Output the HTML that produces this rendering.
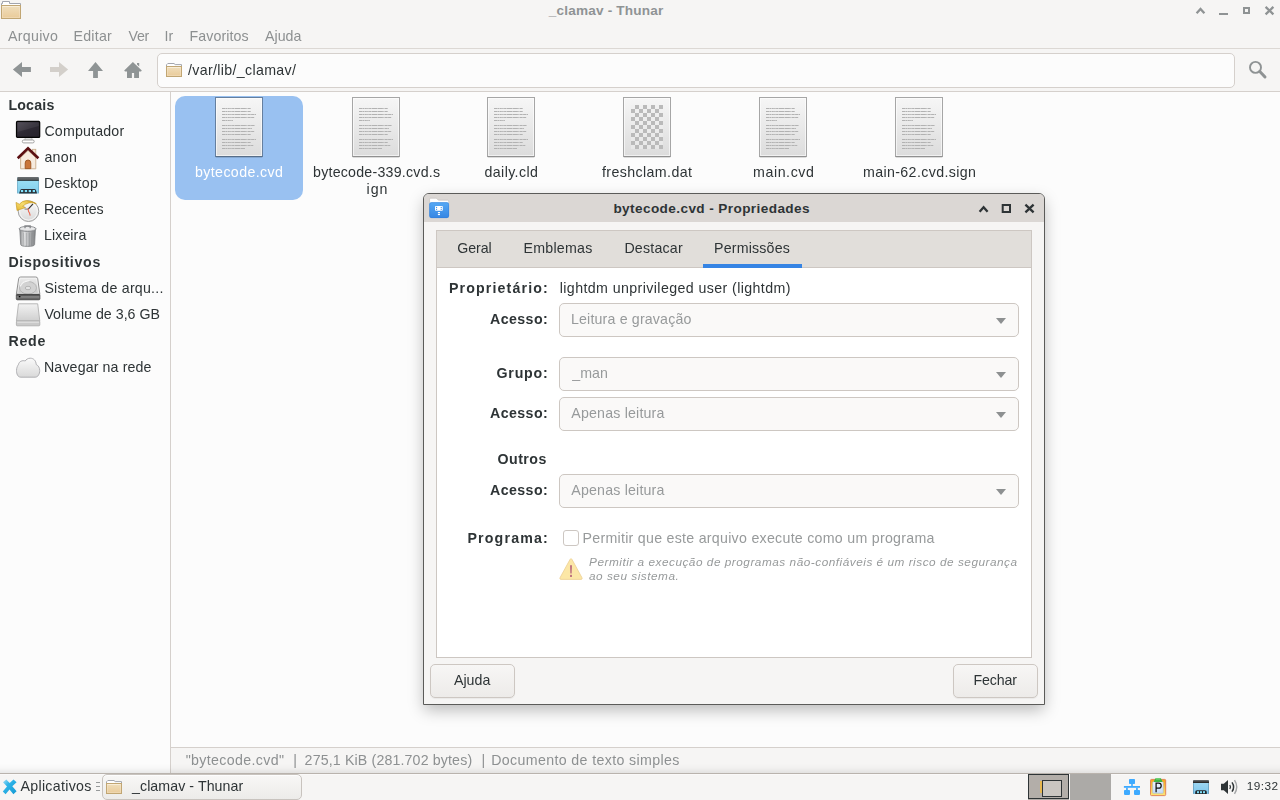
<!DOCTYPE html>
<html><head><meta charset="utf-8">
<style>
*{box-sizing:border-box;margin:0;padding:0}
html,body{width:1280px;height:800px;overflow:hidden;background:#f6f5f4;font-family:"Liberation Sans",sans-serif;font-size:14px;color:#2e3436}
.a{position:absolute}
.t{position:absolute;white-space:nowrap;line-height:20px;height:20px}
svg{position:absolute;overflow:visible}
.combo{position:absolute;left:559px;width:460px;height:34px;border:1px solid #cdc7c2;border-radius:5px;background:#faf9f8}
.combo:after{content:"";position:absolute;left:436px;top:14px;border-left:5px solid transparent;border-right:5px solid transparent;border-top:6px solid #8d9091}
.btn{position:absolute;height:34px;width:85px;border:1px solid #cdc7c2;border-radius:5px;background:linear-gradient(#f7f6f5,#edebe9);box-shadow:0 1px 1px rgba(0,0,0,.05)}
</style></head><body>
<!-- main window chrome -->
<div class="a" style="left:0;top:48px;width:1280px;height:1px;background:#dcd8d4"></div>
<div class="a" style="left:0;top:91px;width:1280px;height:1px;background:#d5d0cc"></div>
<div class="a" style="left:157px;top:53px;width:1078px;height:35px;background:#fcfcfc;border:1px solid #d5d0cc;border-radius:5px"></div>
<div class="a" style="left:0;top:92px;width:170px;height:681px;background:#fcfcfc"></div>
<div class="a" style="left:170px;top:92px;width:1px;height:681px;background:#d5d0cc"></div>
<div class="a" style="left:171px;top:92px;width:1109px;height:655px;background:#fcfcfc"></div>
<div class="a" style="left:171px;top:747px;width:1109px;height:1px;background:#d5d0cc"></div>
<div class="a" style="left:0;top:763px;width:1280px;height:10px;background:linear-gradient(rgba(0,0,0,0),rgba(0,0,0,.02) 50%,rgba(0,0,0,.08))"></div>
<div class="a" style="left:0;top:773px;width:1280px;height:27px;background:#f6f5f4;border-top:1px solid #b9b3ad;box-shadow:inset 0 1px 0 #faf9f9"></div>
<!-- selection -->
<div class="a" style="left:175px;top:96px;width:128px;height:104px;background:#99c1f1;border-radius:10px"></div>
<!-- panel task button -->
<div class="a" style="left:102px;top:774px;width:200px;height:26px;border:1px solid #c8c3be;border-radius:5px;background:linear-gradient(#f8f7f6,#ecebe9);box-shadow:inset 0 1px 0 #fdfdfd"></div>
<svg width="0" height="0" style="left:0;top:0"><defs>
<linearGradient id="fg" x1="0" y1="0" x2="0" y2="1"><stop offset="0" stop-color="#f0dfbd"/><stop offset="1" stop-color="#e9ca98"/></linearGradient>
<linearGradient id="dg" x1="0" y1="0" x2="0" y2="1"><stop offset="0" stop-color="#f6f6f6"/><stop offset="1" stop-color="#dcdcdc"/></linearGradient>
<linearGradient id="mg" x1="0" y1="0" x2="1" y2="0"><stop offset="0" stop-color="#8e9092"/><stop offset=".3" stop-color="#dfe0e1"/><stop offset=".6" stop-color="#b4b6b8"/><stop offset="1" stop-color="#7e8082"/></linearGradient>
<linearGradient id="sg" x1="0" y1="0" x2="1" y2="1"><stop offset="0" stop-color="#4a4550"/><stop offset=".5" stop-color="#2d2933"/><stop offset="1" stop-color="#26222b"/></linearGradient>
<linearGradient id="bg2" x1="0" y1="0" x2="0" y2="1"><stop offset="0" stop-color="#a5daf3"/><stop offset="1" stop-color="#7cc6ec"/></linearGradient>
<linearGradient id="cg" x1="0" y1="0" x2="0" y2="1"><stop offset="0" stop-color="#fafafa"/><stop offset="1" stop-color="#d9d9d9"/></linearGradient>
<linearGradient id="hg" x1="0" y1="0" x2="0" y2="1"><stop offset="0" stop-color="#f2f2f2"/><stop offset="1" stop-color="#cfcfcf"/></linearGradient>
<g id="doc">
 <rect x=".5" y="59" width="47" height="2" rx="1" fill="#000" opacity=".13"/>
 <rect x="1" y="1" width="46" height="58" fill="url(#dg)"/>
 <rect x=".5" y=".5" width="47" height="59" fill="none" stroke="#000" stroke-opacity=".34"/>
 <rect x="1.5" y="1.5" width="45" height="57" fill="none" stroke="#fff" opacity=".6"/>
 <g stroke="#b2b2b2" stroke-width="1" stroke-dasharray="3 .4 2 .4 2 .4 1.500 .4 2 .4 6 .4 5 .4 1 .4 3 .4">
  <path d="M7 11.500H36M7 14.500H35.700M7 17.500H41M7 20.500H39.600M7 23.500H18"/>
  <path d="M7 28.500H40M7 31.500H37M7 34.500H39.600M7 37.500H35.700"/>
  <path d="M7 42.500H41M7 45.500H35.700M7 48.500H38.300M7 51.500H30"/>
 </g>
</g>
<g id="fold">
 <path d="M1.500 5.500V3.500H2.500V1.500H9.500V3.500H20.500V5.500" fill="#fff" stroke="#a3a6ae"/>
 <rect x="1.500" y="5.500" width="19" height="13" fill="url(#fg)" stroke="#c1a673"/>
 <rect x="2.500" y="6.500" width="17" height="11" fill="none" stroke="#f8ecd6" opacity=".35"/><path d="M2.500 6.500H19.500" stroke="#faf0de" opacity=".8"/>
</g>
<g id="fold16">
 <path d="M.5 3.500V1.800L1.800 .5H8L9.200 1.600H15.500V3.500" fill="#fff" stroke="#a3a6ae"/>
 <rect x=".5" y="3.500" width="15" height="10" fill="url(#fg)" stroke="#c1a673"/>
 <rect x="1.500" y="4.500" width="13" height="8" fill="none" stroke="#f8ecd6" opacity=".35"/><path d="M1.500 4.500H14.500" stroke="#faf0de" opacity=".8"/>
</g>
</defs></svg>
<!-- title folder -->
<svg style="left:0;top:0" width="22" height="20"><use href="#fold"/></svg>
<!-- window buttons main -->
<svg style="left:1190px;top:0" width="90" height="22" fill="none" stroke="#8f9394" stroke-width="2">
 <path d="M6.600 13.200L10.500 9L14.400 13.200" stroke-width="2.300"/>
 <path d="M29 14H38"/>
 <rect x="54" y="8" width="5" height="5"/>
 <path d="M75.600 6.900L83.400 14.300M83.400 6.900L75.600 14.300" stroke-width="2.300"/>
</svg>
<!-- toolbar -->
<svg style="left:0;top:49px" width="160" height="42">
 <path d="M12.900 20.400L22 13V18.100H30.900V22.900H22V28Z" fill="#8f9495"/>
 <path d="M68.100 20.400L59 13V18.100H50V22.900H59V28Z" fill="#d3cfca"/>
 <path d="M95.500 12.900L103 21.900H97.900V28.900H93.100V21.900H88Z" fill="#8f9495"/>
 <path d="M132.900 12.900L141.800 21.600L141 22.500H139V28.900H134.100V24H131.900V28.900H127V22.500H125L124.200 21.600Z" fill="#8f9495"/>
 <path d="M137 14H139.200V17.500L137 15.400Z" fill="#8f9495"/>
</svg>
<svg style="left:166px;top:63px" width="16" height="14"><use href="#fold16"/></svg>
<svg style="left:1240px;top:54px" width="36" height="32" fill="none" stroke="#8f9394">
 <circle cx="15.500" cy="13.400" r="5.500" stroke-width="1.900"/>
 <path d="M19.800 17.500L25 23" stroke-width="3" stroke-linecap="round"/>
</svg>
<!-- file icons -->
<svg style="left:215px;top:97px" width="48" height="61"><use href="#doc"/></svg>
<svg style="left:352px;top:97px" width="48" height="61"><use href="#doc"/></svg>
<svg style="left:487px;top:97px" width="48" height="61"><use href="#doc"/></svg>
<svg style="left:623px;top:97px" width="48" height="61">
 <rect x=".5" y="59" width="47" height="2" rx="1" fill="#000" opacity=".13"/>
 <rect x="1" y="1" width="46" height="58" fill="url(#dg)"/>
 <rect x=".5" y=".5" width="47" height="59" fill="none" stroke="#000" stroke-opacity=".34"/>
 <rect x="1.500" y="1.500" width="45" height="57" fill="none" stroke="#fff" opacity=".6"/>
 <defs><pattern id="ck" width="8" height="8" patternUnits="userSpaceOnUse" x="8" y="8"><rect width="8" height="8" fill="#f0f0f0" opacity=".5"/><rect x="4" width="4" height="4" fill="#bababa"/><rect y="4" width="4" height="4" fill="#bababa"/></pattern></defs>
 <rect x="8" y="8" width="32" height="44" fill="url(#ck)"/>
</svg>
<svg style="left:759px;top:97px" width="48" height="61"><use href="#doc"/></svg>
<svg style="left:895px;top:97px" width="48" height="61"><use href="#doc"/></svg>
<!-- sidebar: computer -->
<svg style="left:16px;top:120px" width="25" height="24">
 <path d="M9.200 17.500H15.800L16.300 21H8.700Z" fill="#dedede" stroke="#a6a6a6" stroke-width=".7"/>
 <rect x="6.300" y="20" width="11.900" height="2.900" rx="1.400" fill="#fff" stroke="#999" stroke-width=".9"/>
 <rect x=".5" y="1.400" width="23.200" height="16" rx="1" fill="url(#sg)" stroke="#050505" stroke-width="1.200"/>
 <path d="M1.500 2.400H22.700V6L1.500 12Z" fill="#fff" opacity=".07"/>
</svg>
<!-- home -->
<svg style="left:16px;top:146px" width="24" height="24">
 <rect x="16.400" y="3.300" width="3.400" height="8" fill="#f3e4d2" stroke="#c9ad8a" stroke-width=".8"/>
 <path d="M4.600 11.500L12 4.500L19.800 11.500V22.800H4.600Z" fill="#f6ebdf" stroke="#c9ad8a" stroke-width=".9"/>
 <path d="M1.700 12.200L12 2.300L22.400 12.200" fill="none" stroke="#5b0f12" stroke-width="2.600" stroke-linejoin="miter"/>
 <path d="M9.200 22.600V17Q9.200 14 12 14Q14.800 14 14.800 17V22.600Z" fill="#c9763b" stroke="#9c531f" stroke-width=".9"/>
</svg>
<!-- desktop -->
<svg style="left:16px;top:176px" width="24" height="19">
 <defs><linearGradient id="tb2" x1="0" y1="0" x2="0" y2="1"><stop offset="0" stop-color="#6e7274"/><stop offset=".72" stop-color="#54585a"/><stop offset=".8" stop-color="#161616"/><stop offset="1" stop-color="#161616"/></linearGradient>
 <linearGradient id="bg3" x1="0" y1="0" x2="0" y2="1"><stop offset="0" stop-color="#a0e3f7"/><stop offset="1" stop-color="#7fcdeb"/></linearGradient></defs>
 <rect x="1.200" y="1" width="21.700" height="16.600" rx="1" fill="url(#bg3)"/>
 <path d="M1.200 4.800V2Q1.200 1 2.200 1H21.900Q22.900 1 22.900 2V4.800Z" fill="url(#tb2)"/>
 <path d="M1.200 4.800H1.900V17.600H1.200ZM22.200 4.800H22.900V17.600H22.200Z" fill="#3f7c9c" opacity=".55"/>
 <path d="M3 17.600L4.300 14Q4.700 13 5.800 13H18.400Q19.500 13 19.900 14L21.200 17.600Z" fill="#2b3238"/>
 <g fill="#80e2fd"><rect x="4.900" y="14" width="2.300" height="2.100"/><rect x="8.800" y="14" width="2.300" height="2.100"/><rect x="12.700" y="14" width="2.300" height="2.100"/><rect x="16.700" y="14" width="2.300" height="2.100"/></g>
</svg>
<!-- recent -->
<svg style="left:15px;top:198px" width="26" height="26">
 <defs><linearGradient id="yg" x1="1" y1="0" x2="0" y2="1"><stop offset="0" stop-color="#d8a51e"/><stop offset=".5" stop-color="#f6dc6e"/><stop offset="1" stop-color="#e3b431"/></linearGradient></defs>
 <circle cx="13.500" cy="13.200" r="10.300" fill="url(#cg)" stroke="#a0a0a0" stroke-width="1"/>
 <circle cx="13.500" cy="13.200" r="8.900" fill="none" stroke="#fff" stroke-width="1" opacity=".7"/>
 <path d="M13.200 11.200L18 5.800" stroke="#333" stroke-width="1.100" fill="none"/>
 <path d="M13.200 11.200L9.500 11" stroke="#777" stroke-width="1" fill="none"/>
 <path d="M13 10.300L13.600 13.500L14.500 15L15.200 17.600" stroke="#ea6a55" stroke-width="1.100" fill="none"/>
 <path d="M1 4.400L4.400 6.200Q10 -.8 21.300 5.600Q13.500 2.800 7.600 8.300L10.500 9.500L2 12.500Z" fill="url(#yg)" stroke="#c2931a" stroke-width=".6" stroke-linejoin="round"/>
</svg>
<!-- trash -->
<svg style="left:18px;top:224px" width="20" height="24">
 <path d="M1.800 5.500L2.700 20.500Q2.800 22.400 9.600 22.400Q16.500 22.400 16.600 20.500L17.400 5.500Z" fill="url(#mg)" stroke="#7b7d80" stroke-width=".8"/>
 <path d="M5.400 8.500L5.900 21.500M8.400 8.800V22M11.300 8.800V22M14 8.500L13.600 21.500" stroke="#6a6c6f" stroke-width=".7" opacity=".45" fill="none"/>
 <ellipse cx="9.600" cy="4.900" rx="8.500" ry="2.500" fill="#d9dadb" stroke="#7f8184" stroke-width=".9"/>
 <ellipse cx="9.600" cy="4.500" rx="7" ry="1.500" fill="#ececed" opacity=".8"/>
 <path d="M7 4.300V1.900H12.200V4.300" fill="none" stroke="#85878a" stroke-width="1.300"/>
</svg>
<!-- hdd -->
<svg style="left:16px;top:276px" width="25" height="25">
 <defs><linearGradient id="hs" x1="0" y1="0" x2="0" y2="1"><stop offset="0" stop-color="#2e2e2e"/><stop offset=".45" stop-color="#8c8c8c"/><stop offset="1" stop-color="#4c4c4c"/></linearGradient>
 <linearGradient id="ht" x1="0" y1="0" x2="0" y2="1"><stop offset="0" stop-color="#ececec"/><stop offset="1" stop-color="#c6c6c6"/></linearGradient></defs>
 <path d="M4.600 1H19.800Q21.400 1 21.700 2.600L23.900 18.400H.3L2.700 2.600Q3 1 4.600 1Z" fill="url(#ht)" stroke="#878787" stroke-width=".9"/>
 <path d="M4.800 2.200H19.600Q20.500 2.200 20.600 3L22.500 17.300H1.700L3.800 3Q3.900 2.200 4.800 2.200Z" fill="none" stroke="#fff" stroke-width=".7" opacity=".7"/>
 <ellipse cx="12" cy="11.800" rx="8.500" ry="6.300" fill="#d2d2d2" stroke="#a9a9a9" stroke-width=".7"/>
 <path d="M4.200 10.500Q5.500 5.500 13.500 4.600" fill="none" stroke="#f6f6f6" stroke-width="1.200"/>
 <ellipse cx="12" cy="12" rx="2.800" ry="1.700" fill="#e4e4e4" stroke="#a4a4a4" stroke-width=".7"/>
 <rect x=".3" y="18.400" width="23.600" height="5.400" rx="1" fill="url(#hs)" stroke="#3a3a3a" stroke-width=".7"/>
 <rect x="2.800" y="20" width="1.600" height="1.300" fill="#050505"/>
</svg>
<!-- volume -->
<svg style="left:16px;top:303px" width="25" height="24">
 <path d="M2.500 .8H21.700L23.800 18H.4Z" fill="url(#hg)" stroke="#b1b1b1" stroke-width=".9"/>
 <rect x=".4" y="18" width="23.400" height="4.800" rx=".8" fill="#c9c9c9" stroke="#a9a9a9" stroke-width=".8"/>
 <rect x="1.200" y="18.600" width="21.800" height="1.100" fill="#e4e4e4"/>
</svg>
<!-- cloud -->
<svg style="left:16px;top:357px" width="25" height="22">
 <path d="M4.800 20.200C1.500 20.200 .5 16.500 .5 13.500C.5 10.500 1.800 8.500 2.600 7.200C3 4.500 6.500 3 9.200 4C10 2.500 12 1.200 14.200 1.200C17.500 1.200 20 3.500 20.200 7.500C22.500 8.500 23.700 11 23.700 13.500C23.700 17 22 20.200 19.200 20.200Z" fill="url(#cg)" stroke="#a9a9ad" stroke-width=".9"/>
</svg>
<!-- panel icons -->
<svg style="left:106px;top:780px" width="16" height="14"><use href="#fold16"/></svg>

<svg style="left:0;top:772px" width="28" height="28">
 <defs><linearGradient id="xg" x1="0" y1="0" x2="1" y2="1"><stop offset="0" stop-color="#a6e0f8"/><stop offset=".35" stop-color="#2fb4e8"/><stop offset="1" stop-color="#1499d3"/></linearGradient></defs>
 <path d="M3 10.200L6.300 7.500L9.700 11L13.500 7.600L16.600 10.300L12.300 14.300L16.600 19.300L13.400 22.200L9.500 17.500L5.600 22.200L2.800 19.500L7 14.500Z" fill="url(#xg)"/>
</svg>
<svg style="left:94px;top:780px" width="8" height="12"><path d="M2 2.500H6M2 6.500H6M2 10.500H6" stroke="#979a9b" stroke-width="1"/></svg>
<!-- network -->
<svg style="left:1123px;top:778px" width="18" height="18" fill="#3daaff">
 <rect x="6" y="1" width="6" height="5" rx=".8"/><rect x="8.200" y="6" width="1.600" height="2"/>
 <rect x=".9" y="8" width="16.100" height="1.800"/>
 <rect x="3.100" y="9.800" width="1.700" height="2.200"/><rect x="13.100" y="9.800" width="1.700" height="2.200"/>
 <rect x="1" y="12" width="6" height="4.900" rx=".8"/><rect x="11" y="12" width="6" height="4.900" rx=".8"/>
</svg>
<!-- clipboard -->
<svg style="left:1150px;top:777px" width="17" height="20">
 <defs><linearGradient id="og" x1="0" y1="0" x2="0" y2="1"><stop offset="0" stop-color="#f6a21c"/><stop offset="1" stop-color="#fce678"/></linearGradient>
 <linearGradient id="pg" x1="0" y1="0" x2="0" y2="1"><stop offset="0" stop-color="#f3f7fe"/><stop offset="1" stop-color="#c3daf8"/></linearGradient></defs>
 <rect x=".5" y="2.400" width="15.200" height="16.200" rx="1" fill="url(#og)" stroke="#e07a4e" stroke-width=".9"/>
 <rect x="2.700" y="4.800" width="10.500" height="11.500" rx=".8" fill="url(#pg)" stroke="#9db7d8" stroke-width=".5"/>
 <path d="M3.600 5L5.300 1.600Q5.700 .9 6.500 .9H9.800Q10.600 .9 11 1.600L12.600 5Z" fill="#3db544"/>
 <path d="M6 1.900H10.200" stroke="#9be79b" stroke-width=".9"/>
 <path d="M6.100 15.200V6.200H8.700Q11.200 6.200 11.200 8.700Q11.200 11.200 8.700 11.200H6.100" fill="none" stroke="#111" stroke-width="1.250"/>
</svg>
<!-- desktop panel -->
<svg style="left:1193px;top:780px" width="16" height="14">
 <defs><linearGradient id="tb" x1="0" y1="0" x2="0" y2="1"><stop offset="0" stop-color="#6e7173"/><stop offset="1" stop-color="#1c1c1c"/></linearGradient></defs>
 <rect x="0" y="0" width="16" height="14" rx="1" fill="url(#bg2)"/>
 <path d="M0 3V1Q0 0 1 0H15Q16 0 16 1V3Z" fill="url(#tb)"/>
 <path d="M0 3H.7V14H0ZM15.300 3H16V14H15.300Z" fill="#4f7f9c" opacity=".7"/>
 <path d="M2.200 14V12Q2.200 10.200 4 10.200H12Q13.800 10.200 13.800 12V14Z" fill="#23282b"/>
 <g fill="#7fe0fb"><rect x="4" y="11.200" width="2" height="2"/><rect x="7" y="11.200" width="2" height="2"/><rect x="10" y="11.200" width="2" height="2"/></g>
</svg>
<!-- volume -->
<svg style="left:1220px;top:779px" width="18" height="16" fill="none">
 <path d="M1 4.700H3.800L8 .9V15.100L3.800 11.300H1Z" fill="#2e3436"/>
 <path d="M9.800 6Q11.200 8 9.800 10" stroke="#2e3436" stroke-width="1.300"/>
 <path d="M12 3.300Q15.200 8 12 12.700" stroke="#2e3436" stroke-width="1.500"/>
 <path d="M14.500 1.200Q19 8 14.500 14.800" stroke="#a3a5a6" stroke-width="1.400"/>
</svg>

<!-- workspace switcher -->
<div class="a" style="left:1028px;top:774px;width:41px;height:26px;background:#b1ada9"></div>
<div class="a" style="left:1028px;top:774px;width:41px;height:25px;background:#b3aea9;border:1px solid #2e3436"></div>
<div class="a" style="left:1070px;top:774px;width:41px;height:26px;background:#acaaa7"></div>
<div class="a" style="left:1040px;top:781px;width:2px;height:12px;background:#e6b750"></div>
<div class="a" style="left:1042px;top:780px;width:20px;height:17px;background:#cac6c1;border:1px solid #2e3436"></div>
<!-- dialog -->
<div class="a" id="dlg" style="left:423px;top:193px;width:622px;height:512px;background:#f6f5f4;border:1px solid #5b5b59;border-radius:6px 6px 0 0;box-shadow:0 6px 16px -1px rgba(0,0,0,.27)"></div>
<div class="a" style="left:424px;top:194px;width:620px;height:28px;background:#dbd7d4;border-radius:5px 5px 0 0"></div>
<div class="a" style="left:436px;top:230px;width:596px;height:428px;background:#fff;border:1px solid #cdc7c2"></div>
<div class="a" style="left:437px;top:231px;width:594px;height:37px;background:#e1deda;border-bottom:1px solid #cdc7c2"></div>
<div class="a" style="left:703px;top:264px;width:99px;height:4px;background:#3584e4"></div>
<div class="combo" style="top:303px"></div>
<div class="combo" style="top:357px"></div>
<div class="combo" style="top:397px"></div>
<div class="combo" style="top:474px"></div>
<div class="a" style="left:563px;top:530px;width:16px;height:16px;border:1px solid #cdc7c2;border-radius:3px;background:#fff"></div>
<div class="btn" style="left:430px;top:664px"></div>
<div class="btn" style="left:953px;top:664px"></div>
<!-- dialog icon -->
<svg style="left:428px;top:197px" width="22" height="22">
 <defs><linearGradient id="bf" x1="0" y1="0" x2="0" y2="1"><stop offset="0" stop-color="#55a9f5"/><stop offset="1" stop-color="#3686e3"/></linearGradient></defs>
 <path d="M1.600 7V2.200Q1.600 1.200 2.600 1.200H7.800Q8.600 1.200 9.200 1.900L10.400 3.200H19.700Q20.700 3.200 20.700 4.200V7Z" fill="#fff" stroke="#bdbab7" stroke-width=".6"/>
 <rect x="1.300" y="5.300" width="19.700" height="15.700" rx="2.200" fill="url(#bf)"/>
 <rect x="1.600" y="5.600" width="19.100" height="15.100" rx="2" fill="none" stroke="#2f7bd6" stroke-width=".6" opacity=".7"/>
 <rect x="7" y="9" width="7.800" height="4.700" rx=".8" fill="#fff"/>
 <g fill="#4596ec"><rect x="8" y="9.900" width="1.100" height="1.100"/><rect x="12.700" y="9.900" width="1.100" height="1.100"/><rect x="8" y="11.800" width="1.100" height="1.100"/><rect x="12.700" y="11.800" width="1.100" height="1.100"/></g>
 <rect x="9.900" y="15" width="2.100" height="1.200" fill="#fff"/><rect x="9.900" y="16.900" width="2.100" height="1.200" fill="#fff"/>
</svg>
<!-- dialog buttons -->
<svg style="left:975px;top:199px" width="64" height="20" fill="none" stroke="#2e3436" stroke-width="2">
 <path d="M4.600 12.700L8.600 8.200L12.600 12.700" stroke-width="2.300"/>
 <rect x="27.700" y="6" width="7.300" height="7"/>
 <path d="M50.400 5.600L58.600 13.400M58.600 5.600L50.400 13.400" stroke-width="2.300"/>
</svg>
<!-- warning -->
<svg style="left:558px;top:556px" width="26" height="26">
 <path d="M13 2.700Q13.600 2.700 14 3.500L24 21.800Q24.600 23.400 23 23.400H3Q1.400 23.400 2 21.800L12 3.500Q12.400 2.700 13 2.700Z" fill="#fce7a6" stroke="#eed29a" stroke-width=".9"/>
 <path d="M12.100 9.300H13.900L13.600 17.600H12.400Z" fill="#b5627a"/>
 <rect x="12.100" y="18.800" width="1.800" height="2.200" rx=".4" fill="#b5627a"/>
</svg>

<div class="t" style="left:548.80px;top:1.09px;font-size:13.6px;color:#8f9394;letter-spacing:0.179px;font-weight:bold">_clamav - Thunar</div>
<div class="t" style="left:613.40px;top:199.09px;font-size:13.6px;color:#2e3436;letter-spacing:0.397px;font-weight:bold">bytecode.cvd - Propriedades</div>
<div id="tx" style="position:absolute;left:0;top:0;width:1280px;height:800px;will-change:transform">
<div class="t" style="left:8.00px;top:26.08px;font-size:14.2px;color:#8d9091;letter-spacing:0.298px">Arquivo</div>
<div class="t" style="left:73.50px;top:26.08px;font-size:14.2px;color:#8d9091;letter-spacing:0.232px">Editar</div>
<div class="t" style="left:128.50px;top:26.08px;font-size:14.2px;color:#8d9091;letter-spacing:-0.285px">Ver</div>
<div class="t" style="left:164.50px;top:26.08px;font-size:14.2px;color:#8d9091;letter-spacing:0.058px">Ir</div>
<div class="t" style="left:189.50px;top:26.08px;font-size:14.2px;color:#8d9091;letter-spacing:0.094px">Favoritos</div>
<div class="t" style="left:265.00px;top:26.08px;font-size:14.2px;color:#8d9091;letter-spacing:0.026px">Ajuda</div>
<div class="t" style="left:188.00px;top:60.08px;font-size:14.2px;color:#2e3436;letter-spacing:0.340px">/var/lib/_clamav/</div>
<div class="t" style="left:8.40px;top:95.08px;font-size:14.2px;color:#2e3436;letter-spacing:0.189px;font-weight:bold">Locais</div>
<div class="t" style="left:44.40px;top:121.08px;font-size:14.2px;color:#2e3436;letter-spacing:0.184px">Computador</div>
<div class="t" style="left:44.40px;top:147.08px;font-size:14.2px;color:#2e3436;letter-spacing:0.310px">anon</div>
<div class="t" style="left:44.00px;top:173.08px;font-size:14.2px;color:#2e3436;letter-spacing:0.307px">Desktop</div>
<div class="t" style="left:44.00px;top:199.08px;font-size:14.2px;color:#2e3436;letter-spacing:-0.035px">Recentes</div>
<div class="t" style="left:44.00px;top:225.08px;font-size:14.2px;color:#2e3436;letter-spacing:0.083px">Lixeira</div>
<div class="t" style="left:8.40px;top:252.08px;font-size:14.2px;color:#2e3436;letter-spacing:0.685px;font-weight:bold">Dispositivos</div>
<div class="t" style="left:44.40px;top:278.08px;font-size:14.2px;color:#2e3436;letter-spacing:0.224px">Sistema de arqu...</div>
<div class="t" style="left:44.40px;top:304.08px;font-size:14.2px;color:#2e3436;letter-spacing:0.034px">Volume de 3,6 GB</div>
<div class="t" style="left:8.40px;top:331.08px;font-size:14.2px;color:#2e3436;letter-spacing:0.799px;font-weight:bold">Rede</div>
<div class="t" style="left:44.00px;top:357.08px;font-size:14.2px;color:#2e3436;letter-spacing:0.129px">Navegar na rede</div>
<div class="t" style="left:195.00px;top:162.08px;font-size:14.2px;color:#ffffff;letter-spacing:0.390px">bytecode.cvd</div>
<div class="t" style="left:313.00px;top:162.08px;font-size:14.2px;color:#2e3436;letter-spacing:0.239px">bytecode-339.cvd.s</div>
<div class="t" style="left:366.50px;top:179.08px;font-size:14.2px;color:#2e3436;letter-spacing:0.979px">ign</div>
<div class="t" style="left:484.50px;top:162.08px;font-size:14.2px;color:#2e3436;letter-spacing:0.398px">daily.cld</div>
<div class="t" style="left:602.00px;top:162.08px;font-size:14.2px;color:#2e3436;letter-spacing:0.399px">freshclam.dat</div>
<div class="t" style="left:753.00px;top:162.08px;font-size:14.2px;color:#2e3436;letter-spacing:0.589px">main.cvd</div>
<div class="t" style="left:863.00px;top:162.08px;font-size:14.2px;color:#2e3436;letter-spacing:0.376px">main-62.cvd.sign</div>
<div class="t" style="left:185.70px;top:750.08px;font-size:14.2px;color:#8d9091;letter-spacing:0.351px">"bytecode.cvd"</div>
<div class="t" style="left:293.20px;top:750.08px;font-size:14.2px;color:#8d9091;letter-spacing:0.000px">|</div>
<div class="t" style="left:304.60px;top:750.08px;font-size:14.2px;color:#8d9091;letter-spacing:0.145px">275,1 KiB (281.702 bytes)</div>
<div class="t" style="left:481.60px;top:750.08px;font-size:14.2px;color:#8d9091;letter-spacing:0.000px">|</div>
<div class="t" style="left:491.20px;top:750.08px;font-size:14.2px;color:#8d9091;letter-spacing:0.367px">Documento de texto simples</div>
<div class="t" style="left:20.50px;top:776.08px;font-size:14.2px;color:#2e3436;letter-spacing:0.303px">Aplicativos</div>
<div class="t" style="left:132.00px;top:776.08px;font-size:14.2px;color:#2e3436;letter-spacing:0.072px">_clamav - Thunar</div>
<div class="t" style="left:1246.80px;top:775.91px;font-size:11.8px;color:#2e3436;letter-spacing:0.410px">19:32</div>
<div class="t" style="left:457.25px;top:238.08px;font-size:14.2px;color:#2e3436;letter-spacing:-0.073px">Geral</div>
<div class="t" style="left:523.40px;top:238.08px;font-size:14.2px;color:#2e3436;letter-spacing:0.275px">Emblemas</div>
<div class="t" style="left:624.40px;top:238.08px;font-size:14.2px;color:#2e3436;letter-spacing:0.208px">Destacar</div>
<div class="t" style="left:714.00px;top:238.08px;font-size:14.2px;color:#2e3436;letter-spacing:0.193px">Permissões</div>
<div class="t" style="left:449.00px;top:278.08px;font-size:14.2px;color:#2e3436;letter-spacing:1.132px;font-weight:bold">Proprietário:</div>
<div class="t" style="left:559.75px;top:278.08px;font-size:14.2px;color:#2e3436;letter-spacing:0.408px">lightdm unprivileged user (lightdm)</div>
<div class="t" style="left:490.00px;top:309.08px;font-size:14.2px;color:#2e3436;letter-spacing:0.421px;font-weight:bold">Acesso:</div>
<div class="t" style="left:571.00px;top:309.08px;font-size:14.2px;color:#979a9b;letter-spacing:0.169px">Leitura e gravação</div>
<div class="t" style="left:496.50px;top:363.08px;font-size:14.2px;color:#2e3436;letter-spacing:0.789px;font-weight:bold">Grupo:</div>
<div class="t" style="left:572.25px;top:363.08px;font-size:14.2px;color:#979a9b;letter-spacing:0.050px">_man</div>
<div class="t" style="left:490.00px;top:403.08px;font-size:14.2px;color:#2e3436;letter-spacing:0.421px;font-weight:bold">Acesso:</div>
<div class="t" style="left:571.25px;top:403.08px;font-size:14.2px;color:#979a9b;letter-spacing:0.188px">Apenas leitura</div>
<div class="t" style="left:497.50px;top:449.08px;font-size:14.2px;color:#2e3436;letter-spacing:0.477px;font-weight:bold">Outros</div>
<div class="t" style="left:490.00px;top:480.08px;font-size:14.2px;color:#2e3436;letter-spacing:0.421px;font-weight:bold">Acesso:</div>
<div class="t" style="left:571.25px;top:480.08px;font-size:14.2px;color:#979a9b;letter-spacing:0.188px">Apenas leitura</div>
<div class="t" style="left:467.50px;top:528.08px;font-size:14.2px;color:#2e3436;letter-spacing:1.158px;font-weight:bold">Programa:</div>
<div class="t" style="left:582.50px;top:528.08px;font-size:14.2px;color:#979a9b;letter-spacing:0.278px">Permitir que este arquivo execute como um programa</div>
<div class="t" style="left:589.00px;top:551.91px;font-size:11.8px;color:#979a9b;letter-spacing:0.514px;font-style:italic">Permitir a execução de programas não-confiáveis é um risco de segurança</div>
<div class="t" style="left:589.00px;top:565.91px;font-size:11.8px;color:#979a9b;letter-spacing:0.511px;font-style:italic">ao seu sistema.</div>
<div class="t" style="left:454.00px;top:670.08px;font-size:14.2px;color:#2e3436;letter-spacing:0.001px">Ajuda</div>
<div class="t" style="left:973.50px;top:670.08px;font-size:14.2px;color:#2e3436;letter-spacing:-0.136px">Fechar</div>
</div>
</body></html>
